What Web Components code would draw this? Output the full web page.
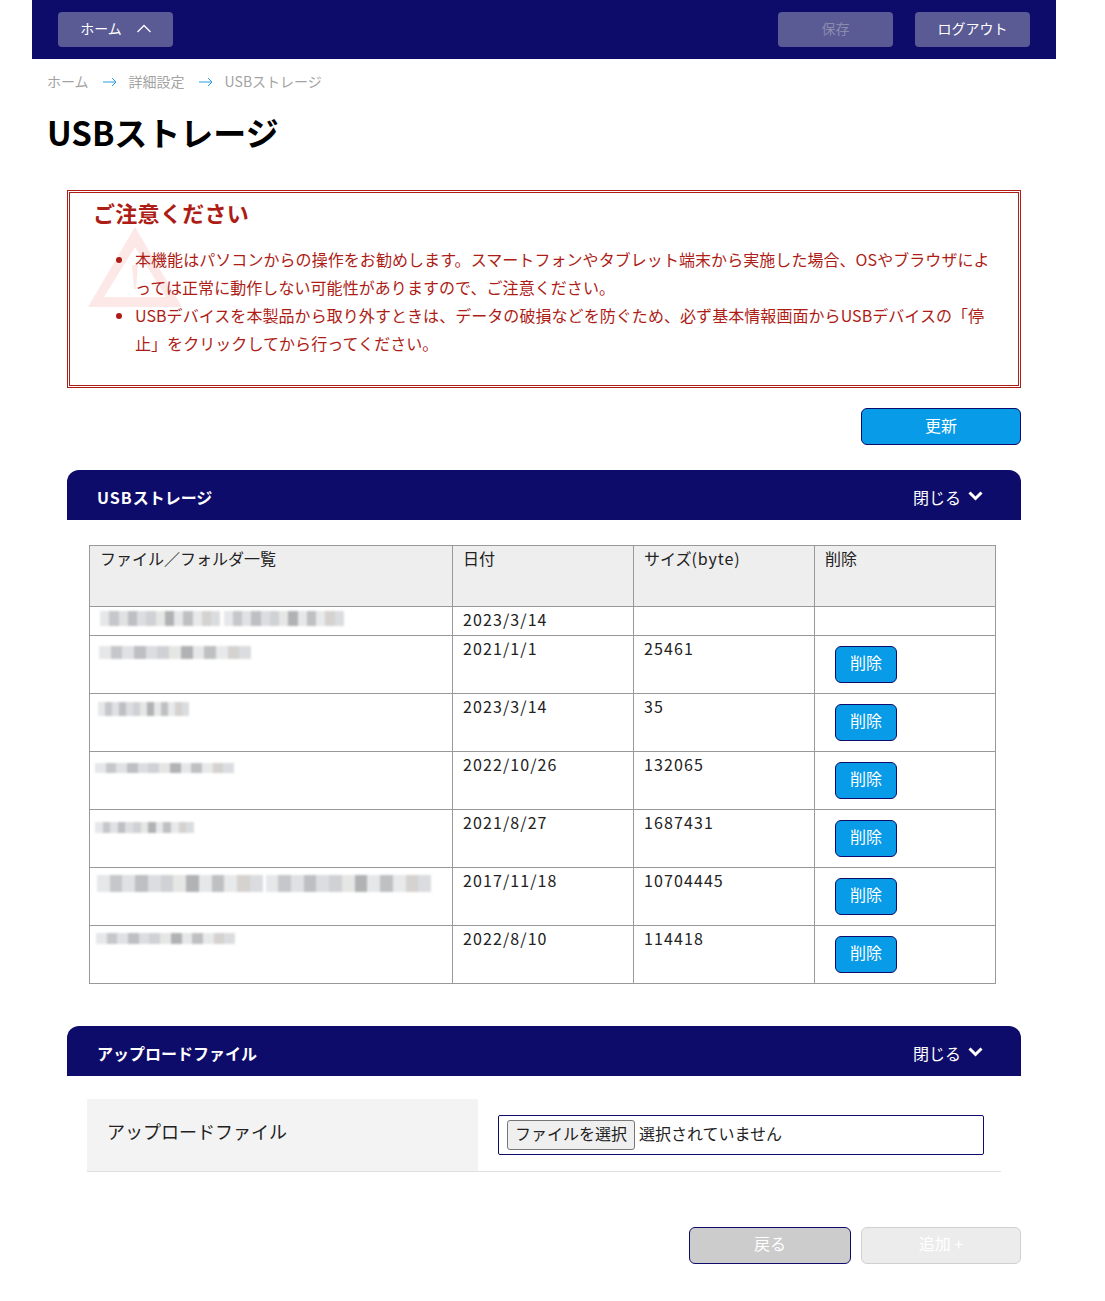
<!DOCTYPE html>
<html lang="ja">
<head>
<meta charset="utf-8">
<title>USBストレージ</title>
<style>
  html, body { margin: 0; background: #fff; }
  body { font-family: "Noto Sans CJK JP", "Noto Sans", sans-serif; color: #000; }
</style>
</head>
<body>

<app-page>
  <app-header slot="header"></app-header>
  <bread-crumbs></bread-crumbs>
  <page-title>USBストレージ</page-title>
  <notice-box heading="ご注意ください">
    <li>本機能はパソコンからの操作をお勧めします。スマートフォンやタブレット端末から実施した場合、OSやブラウザによっては正常に動作しない可能性がありますので、ご注意ください。</li>
    <li>USBデバイスを本製品から取り外すときは、データの破損などを防ぐため、必ず基本情報画面からUSBデバイスの「停止」をクリックしてから行ってください。</li>
  </notice-box>
  <refresh-bar></refresh-bar>
  <panel-section heading="USBストレージ" gap="25">
    <storage-table></storage-table>
  </panel-section>
  <panel-section heading="アップロードファイル" gap="23" style="margin-top:42px">
    <upload-row></upload-row>
  </panel-section>
  <footer-bar></footer-bar>
</app-page>

<script>
  const FONT = `"Noto Sans CJK JP", "Noto Sans", sans-serif`;

  function define(name, html, extra) {
    class El extends HTMLElement {
      constructor() {
        super();
        const shadow = this.attachShadow({ mode: 'open' });
        const tpl = document.createElement('template');
        tpl.innerHTML = typeof html === 'function' ? html(this) : html;
        shadow.appendChild(tpl.content.cloneNode(true));
      }
      connectedCallback() {
        if (extra) extra(this);
      }
    }
    customElements.define(name, El);
  }

  define('app-page', `
    <style>
      :host { display: block; width: 1024px; margin-left: 32px; padding-bottom: 37px; }
    </style>
    <slot name="header"></slot>
    <slot></slot>
  `);

  define('head-button', (el) => `
    <style>
      :host { display: block; }
      div {
        width: 115px; height: 35px; box-sizing: border-box; padding-bottom: 3px;
        display: flex; align-items: center; justify-content: center; gap: 15px;
        background: #5a5a95; border-radius: 4px; color: #fff;
        font: 14px/20px ${FONT};
      }
      :host([disabled]) div { color: #8b8bad; }
      svg { display: block; }
    </style>
    <div><slot></slot>${el.hasAttribute('chev') ? `<svg width="14" height="9" viewBox="0 0 14 9" fill="none" stroke="#fff" stroke-width="1.3"><path d="M.5 8 7 1.5 13.5 8"/></svg>` : ''}</div>
  `);

  define('app-header', `
    <style>
      :host {
        display: flex; align-items: flex-start; height: 59px; box-sizing: border-box;
        padding: 12px 26px; background: #0e0c6a;
      }
      .grow { flex: 1; }
      .last { margin-left: 22px; }
    </style>
    <head-button chev>ホーム</head-button>
    <span class="grow"></span>
    <head-button disabled>保存</head-button>
    <head-button class="last">ログアウト</head-button>
  `);

  define('bread-crumbs', `
    <style>
      :host {
        display: flex; align-items: center; height: 46px; box-sizing: border-box;
        padding: 0 0 2px 15px; font: 14px/20px ${FONT}; color: #a3a3a3;
      }
      svg { display: block; margin: 2px 12px 0 14px; }
    </style>
    <span>ホーム</span>
    <svg width="14" height="10" viewBox="0 0 14 10" fill="none" stroke="#2a9fe6" stroke-width="1"><path d="M0 5h13M9 1l4 4-4 4"/></svg>
    <span>詳細設定</span>
    <svg width="14" height="10" viewBox="0 0 14 10" fill="none" stroke="#2a9fe6" stroke-width="1"><path d="M0 5h13M9 1l4 4-4 4"/></svg>
    <span>USBストレージ</span>
  `);

  define('page-title', `
    <style>
      :host {
        display: block; height: 85px; padding: 4px 0 0 15px; box-sizing: border-box;
        font: 700 33px/46px ${FONT}; color: #000;
      }
    </style>
    <slot></slot>
  `);

  define('notice-box', (el) => `
    <style>
      :host {
        display: block; position: relative; isolation: isolate; margin-left: 35px; width: 954px; height: 198px;
        box-sizing: border-box; border: 3px double #ad1d16; color: #ad1d16;
        padding: 5px 27px 0 23px;
      }
      h2 { margin: 0; font: 700 22px/28px ${FONT}; letter-spacing: .3px; }
      ul { margin: 19px 0 0; padding: 0 0 0 42px; letter-spacing: .06px; }
      ::slotted(li) { font: 16px/28px ${FONT}; }
      svg { position: absolute; left: 18px; top: 34px; z-index: -1; }
    </style>
    <svg width="94" height="80" viewBox="0 0 94 80" fill="#fde8e8">
      <path fill-rule="evenodd" d="M47 0 94 80H0zM47 20 16 70h62z"/><path d="M44 38h6l-2 24h-2z"/>
    </svg>
    <h2>${el.getAttribute('heading')}</h2>
    <ul><slot></slot></ul>
  `);

  define('app-button', (el) => `
    <style>
      :host { display: block; }
      div {
        box-sizing: border-box; width: ${el.getAttribute('w')}px; height: 37px; padding-bottom: ${el.getAttribute('lift') || 3}px;
        display: flex; align-items: center; justify-content: center;
        border: 1px solid #0e0c6a; border-radius: 6px;
        background: #089be8; color: #fff; font: 16px/24px ${FONT};
      }
      :host([kind=back]) div { background: #ccc; }
      :host([kind=off]) div { background: #ececec; border-color: #d0d0d0; }
    </style>
    <div><slot></slot></div>
  `);

  define('refresh-bar', `
    <style>
      :host { display: flex; justify-content: flex-end; width: 989px; margin-top: 20px; height: 62px; }
    </style>
    <app-button w="160">更新</app-button>
  `);

  define('panel-section', (el) => `
    <style>
      :host { display: block; margin-left: 35px; width: 954px; }
      header {
        display: flex; align-items: center; height: 50px; box-sizing: border-box;
        padding: 4px 38px 0 30px; background: #0e0c6a; color: #fff;
        border-radius: 12px 12px 0 0;
      }
      b { flex: 1; font: 700 16px/24px ${FONT}; }
      span { font: 16px/24px ${FONT}; }
      svg { display: block; margin: 0 0 3px 7px; }
      main { padding-top: ${el.getAttribute('gap')}px; }
    </style>
    <header>
      <b>${el.getAttribute('heading').replace('USB', '<i style="font-style:normal;letter-spacing:1px">USB</i>')}</b>
      <span>閉じる</span>
      <svg width="15" height="10" viewBox="0 0 15 10" fill="none" stroke="#fff" stroke-width="3"><path d="M1.5 1.5 7.5 7.5l6-6"/></svg>
    </header>
    <main><slot></slot></main>
  `);

  // greys sampled from the blurred file names, the same run repeats
  const TINTS = ['#e6e7e8', '#c6c7ca', '#e0e1e3', '#bebfc2', '#dcdde0', '#cfd1d5', '#e6e6e4', '#b0b2b4', '#e6e7e8', '#bfc0c2', '#e8e9ea', '#d5d2cf', '#dadcdf'];

  define('blur-name', (el) => {
    const parts = +el.getAttribute('parts') || 1;
    const group = '<i class="g">' + TINTS.map(c => `<i style="background:${c}"></i>`).join('') + '</i>';
    return `
    <style>
      :host {
        display: flex; gap: 3px; filter: blur(1px);
        margin: ${el.getAttribute('top')}px 0 0 ${el.getAttribute('left')}px;
        width: ${el.getAttribute('w')}px; height: ${el.getAttribute('h')}px;
      }
      .g { display: flex; flex: 1; }
      .g i { flex: 1; }
    </style>
    ${group.repeat(parts)}`;
  });

  const ROWS = [
    ['2023/3/14', '', false, [4, 5, 244, 15, 2]],
    ['2021/1/1', '25461', true, [10, 4, 152, 13, 1]],
    ['2023/3/14', '35', true, [8, 3, 91, 14, 1]],
    ['2022/10/26', '132065', true, [11, 0, 139, 10, 1]],
    ['2021/8/27', '1687431', true, [12, 0, 99, 11, 1]],
    ['2017/11/18', '10704445', true, [7, 2, 334, 17, 2]],
    ['2022/8/10', '114418', true, [7, 1, 139, 11, 1]],
  ];

  define('storage-table', `
    <style>
      :host { display: block; margin-left: 22px; width: 907px; }
      table { border-collapse: collapse; width: 907px; table-layout: fixed; font: 16px/22px ${FONT}; color: #222; }
      td, th { box-sizing: border-box; border: 1px solid #999; padding: 1px 10px; vertical-align: top; text-align: left; font-weight: 400; }
      th { background: #eee; height: 61px; }
      th i { font-style: normal; letter-spacing: .9px; }
      tr.r td { height: 58px; }
      tr.first td { height: 29px; }
      td.name { padding: 0 0 0 5px; }
      td.num { letter-spacing: 1.1px; }
      td.act { padding: 10px 20px 0; }
    </style>
    <table>
      <colgroup><col style="width:363px"><col style="width:181px"><col style="width:181px"><col style="width:181px"></colgroup>
      <thead><tr><th>ファイル／フォルダ一覧</th><th>日付</th><th>サイズ<i>(byte)</i></th><th>削除</th></tr></thead>
      <tbody></tbody>
    </table>
  `, (el) => {
    const body = el.shadowRoot.querySelector('tbody');
    ROWS.forEach((r, i) => {
      const b = r[3];
      const tr = document.createElement('tr');
      tr.className = i ? 'r' : 'first';
      tr.innerHTML = `
        <td class="name"><blur-name top="${b[0]}" left="${b[1]}" w="${b[2]}" h="${b[3]}" parts="${b[4]}"></blur-name></td>
        <td class="num">${r[0]}</td>
        <td class="num">${r[1]}</td>
        <td class="act">${r[2] ? '<app-button w="62" lift="5">削除</app-button>' : ''}</td>`;
      body.appendChild(tr);
    });
  });

  define('upload-row', `
    <style>
      :host {
        display: flex; align-items: stretch; margin-left: 20px; width: 914px; height: 73px;
        box-sizing: border-box; border-bottom: 1px solid #e0e0e0;
      }
      .label {
        width: 391px; box-sizing: border-box; padding: 0 0 9px 20px; background: #f3f3f3;
        display: flex; align-items: center; font: 18px/28px ${FONT}; color: #222;
      }
      .file {
        margin: 16px 0 0 20px; width: 486px; height: 40px; box-sizing: border-box;
        border: 1px solid #0e0c6a; border-radius: 2px;
        display: flex; align-items: center; padding: 0 0 0 8px; font: 16px/24px ${FONT}; color: #222;
      }
      .file span { position: relative; top: -2px; }
      .pick {
        width: 128px; height: 30px; box-sizing: border-box; margin-right: 4px;
        display: flex; align-items: center; justify-content: center;
        background: #efefef; border: 1px solid #767676; border-radius: 3px;
      }
      .file span.pick { top: 0; padding-bottom: 5px; }
    </style>
    <div class="label">アップロードファイル</div>
    <div class="file"><span class="pick">ファイルを選択</span><span>選択されていません</span></div>
  `);

  define('footer-bar', `
    <style>
      :host { display: flex; justify-content: flex-end; gap: 10px; width: 989px; margin-top: 55px; }
    </style>
    <app-button w="162" kind="back" lift="5">戻る</app-button>
    <app-button w="160" kind="off" lift="5">追加 +</app-button>
  `);
</script>
</body>
</html>
